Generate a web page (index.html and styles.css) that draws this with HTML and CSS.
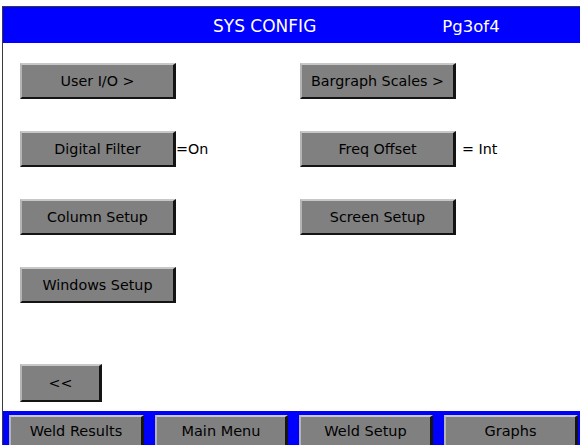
FILE: index.html
```html
<!DOCTYPE html>
<html>
<head>
<meta charset="utf-8">
<link rel="stylesheet" href="styles.css">
</head>
<body>
<div class="screen">
  <div class="header">
    <span class="title">SYS CONFIG</span>
    <span class="page">Pg3of4</span>
  </div>
  <div class="content">
    <div class="grid">
      <div class="cell"><div class="btn">User I/O &gt;</div></div>
      <div class="cell"><div class="btn">Bargraph Scales &gt;</div></div>
      <div class="cell"><div class="btn">Digital Filter</div><span class="val">=On</span></div>
      <div class="cell"><div class="btn">Freq Offset</div><span class="val val-gap">= Int</span></div>
      <div class="cell"><div class="btn">Column Setup</div></div>
      <div class="cell"><div class="btn">Screen Setup</div></div>
      <div class="cell"><div class="btn">Windows Setup</div></div>
    </div>
    <div class="btn back">&lt;&lt;</div>
  </div>
  <div class="footer">
    <div class="btn fbtn">Weld Results</div>
    <div class="btn fbtn">Main Menu</div>
    <div class="btn fbtn">Weld Setup</div>
    <div class="btn fbtn">Graphs</div>
  </div>
</div>
</body>
</html>
```
FILE: styles.css
```css
html, body {
  margin: 0;
  padding: 0;
  background: #ffffff;
  width: 580px;
  height: 445px;
  overflow: hidden;
  font-family: "DejaVu Sans", Verdana, sans-serif;
}
.screen {
  margin: 6px 0 0 2px;
  border-top: 1px solid #3a3a3a;
  border-left: 1px solid #3a3a3a;
  height: 438px;
  display: flex;
  flex-direction: column;
}
.header {
  flex-shrink: 0;
  height: 36px;
  background: #0000ff;
  color: #ffffff;
  display: flex;
  align-items: center;
  font-size: 17px;
  padding-top: 2px;
  box-sizing: border-box;
}
.title {
  margin-left: 210px;
}
.page {
  margin-left: 126px;
  font-size: 16.5px;
}
.content {
  flex-shrink: 0;
  height: 368px;
  box-sizing: border-box;
  padding: 20px 0 0 17px;
}
.grid {
  display: grid;
  grid-template-columns: 280px 200px;
  grid-auto-rows: 36px;
  row-gap: 32px;
}
.cell {
  display: flex;
  align-items: center;
}
.btn {
  box-sizing: border-box;
  width: 156px;
  height: 36px;
  background: #808080;
  border-top: 2px solid #c8c8c8;
  border-left: 2px solid #b4b4b4;
  border-right: 3px solid #141414;
  border-bottom: 2px solid #141414;
  color: #000000;
  font-size: 14.3px;
  display: flex;
  align-items: center;
  justify-content: center;
}
.val {
  font-size: 14.3px;
  color: #000;
}
.val-gap {
  margin-left: 6px;
}
.back {
  width: 82px;
  height: 38px;
  margin-top: 61px;
}
.footer {
  flex: 1;
  background: #0000ff;
  display: grid;
  grid-template-columns: 135px 133px 134px 134px;
  column-gap: 11px;
  padding: 4px 0 0 6px;
  box-sizing: border-box;
}
.fbtn {
  width: auto;
  height: 34px;
  border-bottom: none;
  font-size: 14.5px;
  align-items: flex-start;
  padding-top: 6px;
}
```
